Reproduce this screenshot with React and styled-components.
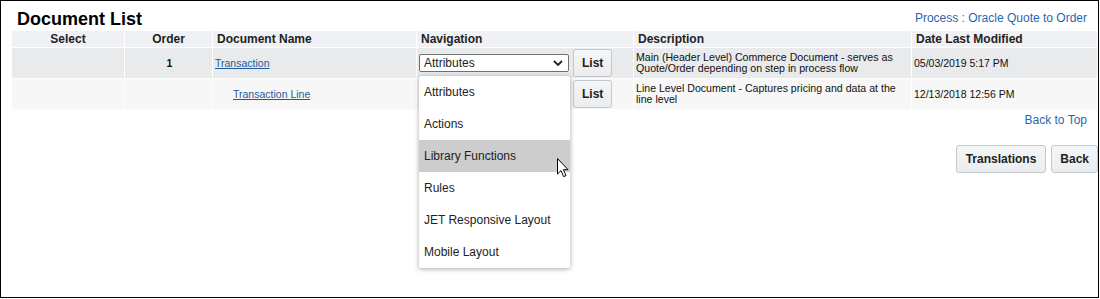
import React from "react";
import styled, { createGlobalStyle } from "styled-components";

const Global = createGlobalStyle`
  html, body { margin: 0; padding: 0; background: #fff; }
  body { font-family: "Liberation Sans", Arial, sans-serif; }
`;

const Frame = styled.div`
  box-sizing: border-box;
  width: 1099px;
  height: 298px;
  border: 1px solid #000;
  padding: 0 0 0 10px;
  background: #fff;
  font-family: "Liberation Sans", Arial, sans-serif;
  color: #222;
`;

const TitleBar = styled.div`
  display: flex;
  justify-content: space-between;
  align-items: flex-start;
  height: 29px;
  padding-right: 11px;
`;

const Title = styled.h1`
  margin: 8px 0 0 6px;
  font-size: 18px;
  line-height: 21px;
  font-weight: bold;
  color: #000;
`;

const PlainLink = styled.a`
  font-size: 12px;
  line-height: 14px;
  color: #2767b0;
  text-decoration: none;
  margin-top: ${(p) => p.$top || 0}px;
`;

const Table = styled.table`
  width: 1087px;
  table-layout: fixed;
  border-collapse: separate;
  border-spacing: 1px;
`;

const Col = styled.col`
  width: ${(p) => p.$w}px;
`;

const Th = styled.th`
  height: 16px;
  padding: 0 0 0 ${(p) => (p.$center ? 0 : 4)}px;
  background: #f0f1f4;
  font-size: 12px;
  font-weight: bold;
  color: #222;
  text-align: ${(p) => (p.$center ? "center" : "left")};
  vertical-align: middle;
  white-space: nowrap;
`;

const Row = styled.tr`
  background: ${(p) => p.$bg};
`;

const Td = styled.td`
  height: 30px;
  padding: 0 0 0 2px;
  font-size: 10.5px;
  color: #111;
  text-align: ${(p) => (p.$center ? "center" : "left")};
  vertical-align: ${(p) => (p.$top ? "top" : "middle")};
  font-weight: ${(p) => (p.$bold ? "bold" : "normal")};
  position: relative;
`;

const DocLink = styled.a`
  color: #1d5a9c;
  text-decoration: underline;
  font-size: 10.5px;
  padding-left: ${(p) => p.$indent || 0}px;
`;

const Desc = styled.div`
  padding-top: 4px;
  line-height: 11px;
  font-size: 10.6px;
`;

const NavCell = styled.div`
  display: flex;
  align-items: center;
  gap: 4px;
`;

const SelectWrap = styled.div`
  position: relative;
`;

const SelectBox = styled.div`
  box-sizing: border-box;
  width: 150px;
  height: 18px;
  border: 1px solid #707070;
  border-radius: 2px;
  background: #fff;
  display: flex;
  align-items: center;
  justify-content: space-between;
  padding: 0 5px 0 4px;
  font-size: 12px;
  color: #222;
`;

const Button = styled.button`
  box-sizing: border-box;
  height: 28px;
  padding: 0 ${(p) => p.$pad || 8}px;
  border: 1px solid #c3c8cd;
  border-radius: 3px;
  background: linear-gradient(#f5f6f7, #eaecee);
  font-family: "Liberation Sans", Arial, sans-serif;
  font-size: 12px;
  font-weight: bold;
  color: #222;
  cursor: pointer;
`;

const Menu = styled.ul`
  position: absolute;
  top: calc(100% + 4px);
  left: 0;
  width: 151px;
  margin: 0;
  padding: 0;
  list-style: none;
  background: #fff;
  box-shadow: 0 1px 5px rgba(0, 0, 0, 0.35);
  border-radius: 2px;
  z-index: 10;
`;

const MenuItem = styled.li`
  height: 32px;
  line-height: 32px;
  padding-left: 5px;
  font-size: 12px;
  color: #222;
  background: ${(p) => (p.$active ? "#cdcdcd" : "transparent")};
`;

const Cursor = styled.svg`
  position: absolute;
  left: 138px;
  top: 82px;
`;

const BackTop = styled.div`
  display: flex;
  justify-content: flex-end;
  padding-right: 11px;
  margin-top: 3px;
`;

const Actions = styled.div`
  display: flex;
  justify-content: flex-end;
  gap: 5px;
  margin-top: 18px;
`;

const Chevron = () => (
  <svg width="10" height="6" viewBox="0 0 10 6">
    <path d="M1 1 L5 5 L9 1" fill="none" stroke="#222" strokeWidth="1.8" />
  </svg>
);

const items = [
  "Attributes",
  "Actions",
  "Library Functions",
  "Rules",
  "JET Responsive Layout",
  "Mobile Layout",
];

export default function App() {
  return (
    <>
      <Global />
      <Frame>
        <TitleBar>
          <Title>Document List</Title>
          <PlainLink href="#" $top={10}>
            Process : Oracle Quote to Order
          </PlainLink>
        </TitleBar>
        <Table>
          <colgroup>
            <Col $w={112} />
            <Col $w={87} />
            <Col $w={203} />
            <Col $w={216} />
            <Col $w={277} />
            <Col $w={185} />
          </colgroup>
          <thead>
            <tr>
              <Th $center>Select</Th>
              <Th $center>Order</Th>
              <Th>Document Name</Th>
              <Th>Navigation</Th>
              <Th>Description</Th>
              <Th>Date Last Modified</Th>
            </tr>
          </thead>
          <tbody>
            <Row $bg="#e9eaec">
              <Td />
              <Td $center $bold>1</Td>
              <Td>
                <DocLink href="#">Transaction</DocLink>
              </Td>
              <Td>
                <NavCell>
                  <SelectWrap>
                    <SelectBox>
                      <span>Attributes</span>
                      <Chevron />
                    </SelectBox>
                    <Menu>
                      {items.map((it) => (
                        <MenuItem key={it} $active={it === "Library Functions"}>
                          {it}
                        </MenuItem>
                      ))}
                      <Cursor width="13" height="20" viewBox="0 0 13 20">
                        <path
                          d="M0.5 0.5 L0.5 16 L4 12.6 L6.6 18.6 L9 17.6 L6.4 11.7 L11 11.7 Z"
                          fill="#fff"
                          stroke="#000"
                          strokeWidth="1"
                          strokeLinejoin="round"
                        />
                      </Cursor>
                    </Menu>
                  </SelectWrap>
                  <Button $pad={8}>List</Button>
                </NavCell>
              </Td>
              <Td $top>
                <Desc>
                  Main (Header Level) Commerce Document - serves as
                  Quote/Order depending on step in process flow
                </Desc>
              </Td>
              <Td>05/03/2019 5:17 PM</Td>
            </Row>
            <Row $bg="#f7f7f7">
              <Td />
              <Td />
              <Td>
                <DocLink href="#" $indent={18}>Transaction Line</DocLink>
              </Td>
              <Td>
                <NavCell>
                  <SelectBox>
                    <span>Attributes</span>
                    <Chevron />
                  </SelectBox>
                  <Button $pad={8}>List</Button>
                </NavCell>
              </Td>
              <Td $top>
                <Desc>
                  Line Level Document - Captures pricing and data at the line
                  level
                </Desc>
              </Td>
              <Td>12/13/2018 12:56 PM</Td>
            </Row>
          </tbody>
        </Table>
        <BackTop>
          <PlainLink href="#">Back to Top</PlainLink>
        </BackTop>
        <Actions>
          <Button $pad={9}>Translations</Button>
          <Button $pad={8}>Back</Button>
        </Actions>
      </Frame>
    </>
  );
}
